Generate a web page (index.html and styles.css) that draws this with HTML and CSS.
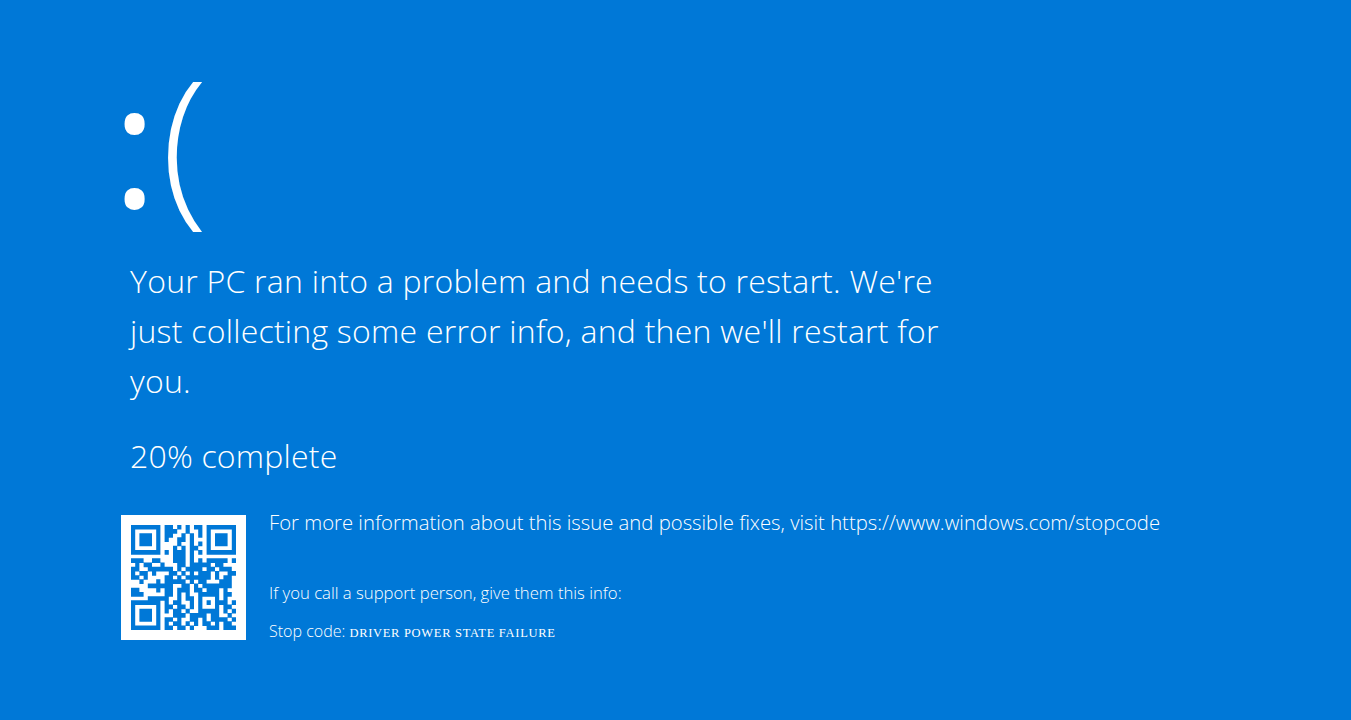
FILE: index.html
```html
<!DOCTYPE html>
<html lang="en">
<head>
    <meta charset="UTF-8">
    <meta name="viewport" content="width=device-width, initial-scale=1.0">
    <title>Your PC ran into a problem</title>
    <link rel="stylesheet" href="styles.css">
</head>
<body>
    <main class="screen">
        <div class="face"><span class="eyes">:</span><span class="mouth">(</span></div>
        <p class="message">Your PC ran into a problem and needs to restart. We're just collecting some error info, and then we'll restart for you.</p>
        <p class="progress">20% complete</p>
        <div class="details">
            <div class="qr">
                <svg class="qr-code" viewBox="0 0 25 25" aria-label="QR code">
                    <path d="M0 .5h7M8 .5h2M11 .5h1M13 .5h1M15 .5h2M18 .5h7
                    M0 1.5h1M6 1.5h1M8 1.5h3M13 1.5h1M16 1.5h1M18 1.5h1M24 1.5h1
                    M0 2.5h1M2 2.5h3M6 2.5h1M8 2.5h2M12 2.5h1M14 2.5h1M16 2.5h1M18 2.5h1M20 2.5h3M24 2.5h1
                    M0 3.5h1M2 3.5h3M6 3.5h1M8 3.5h1M11 3.5h2M14 3.5h1M18 3.5h1M20 3.5h3M24 3.5h1
                    M0 4.5h1M2 4.5h3M6 4.5h1M11 4.5h1M14 4.5h1M16 4.5h1M18 4.5h1M20 4.5h3M24 4.5h1
                    M0 5.5h1M6 5.5h1M10 5.5h1M12 5.5h1M14 5.5h2M18 5.5h1M24 5.5h1
                    M0 6.5h7M8 6.5h1M10 6.5h3M14 6.5h1M16 6.5h1M18 6.5h7
                    M10 7.5h3M14 7.5h1
                    M0 8.5h3M5 8.5h2M10 8.5h3M14 8.5h1M16 8.5h1M18 8.5h5M24 8.5h1
                    M1 9.5h1M3 9.5h2M7 9.5h1M11 9.5h2M14 9.5h5M20 9.5h2
                    M0 10.5h2M4 10.5h6M11 10.5h1M13 10.5h4M18 10.5h2M21 10.5h3
                    M0 11.5h1M2 11.5h2M5 11.5h1M9 11.5h2M12 11.5h1M14 11.5h1M16 11.5h3M20 11.5h1M23 11.5h2
                    M0 12.5h2M3 12.5h1M8 12.5h2M11 12.5h1M13 12.5h6M20 12.5h1M22 12.5h2
                    M2 13.5h1M6 13.5h1M8 13.5h5M14 13.5h1M16 13.5h2M21 13.5h3
                    M4 14.5h4M8 14.5h2M12 14.5h2M15 14.5h1M17 14.5h7
                    M0 15.5h2M6 15.5h1M8 15.5h2M11 15.5h2M13 15.5h1M15 15.5h2M18 15.5h3M22 15.5h1
                    M0 16.5h3M8 16.5h2M11 16.5h1M13 16.5h1M16 16.5h5M22 16.5h2
                    M4 17.5h5M11 17.5h1M13 17.5h2M16 17.5h1M20 17.5h1M22 17.5h1
                    M0 18.5h7M8 18.5h1M10 18.5h2M14 18.5h1M16 18.5h1M18 18.5h1M20 18.5h3M24 18.5h1
                    M0 19.5h1M6 19.5h1M8 19.5h2M11 19.5h2M14 19.5h1M16 19.5h1M20 19.5h1M22 19.5h2
                    M0 20.5h1M2 20.5h3M6 20.5h1M8 20.5h1M10 20.5h2M13 20.5h1M16 20.5h5M22 20.5h1M24 20.5h1
                    M0 21.5h1M2 21.5h3M6 21.5h1M10 21.5h3M14 21.5h4M19 21.5h2M23 21.5h1
                    M0 22.5h1M2 22.5h3M6 22.5h1M8 22.5h2M11 22.5h1M14 22.5h2M17 22.5h1M19 22.5h4M24 22.5h1
                    M0 23.5h1M6 23.5h1M8 23.5h1M10 23.5h2M13 23.5h1M15 23.5h1M17 23.5h2M20 23.5h1M22 23.5h2
                    M0 24.5h7M8 24.5h2M11 24.5h2M14 24.5h1M18 24.5h3M22 24.5h3"/>
                </svg>
            </div>
            <div class="info">
                <p class="more">For more information about this issue and possible fixes, visit https://www.windows.com/stopcode</p>
                <p class="support">If you call a support person, give them this info:</p>
                <p class="stop">Stop code: <span class="stop-name">DRIVER POWER STATE FAILURE</span></p>
            </div>
        </div>
    </main>
</body>
</html>
```

FILE: styles.css
```css
html,body{margin:0;height:100%}
body{background:#0078d7;color:#fff;font-family:"Open Sans","Noto Sans",sans-serif;font-weight:300;overflow:hidden}
p{margin:0}
.screen{padding:56px 0 0 130px}
.face{display:flex;height:200px;font-size:172px}
.eyes{font-weight:380;width:49px;margin-left:-18px;line-height:170px}
.mouth{font-weight:340;line-height:164px}
.message{width:830px;font-size:32px;line-height:50px;letter-spacing:.24px}
.progress{margin-top:25px;font-size:32px;line-height:50px;letter-spacing:.2px}
.details{display:flex;margin:34px 0 0 -9px}
.qr{width:125px;height:125px;background:#fff;display:flex;align-items:center;justify-content:center}
.qr-code{width:105px;height:105px;fill:none;stroke:#0078d7;stroke-width:1.12}
.info{margin-left:23px;display:flex;flex-direction:column}
.more{font-size:20.3px;line-height:26px;margin-top:-6px}
.support{font-size:16.7px;line-height:22px;margin-top:47px}
.stop{font-size:16px;line-height:22px;margin-top:16px}
.stop-name{font-family:"Liberation Serif",serif;font-weight:400;font-size:12.5px;letter-spacing:.7px}
```
